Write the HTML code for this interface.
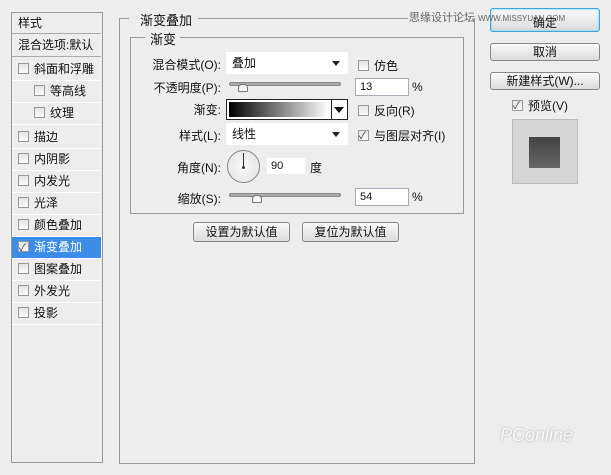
<!DOCTYPE html><html><head><meta charset="utf-8"><style>
*{box-sizing:border-box;margin:0;padding:0}
body{width:611px;height:475px;background:#ededed;font-family:"Liberation Sans","Noto Sans CJK SC",sans-serif;font-size:12px;color:#111;position:relative;overflow:hidden}
.a{position:absolute}
.row{position:absolute;left:12px;width:89px;height:22px;border-bottom:1px solid #fff;line-height:21px;padding-left:6px}
.cb{display:inline-block;width:11px;height:11px;border:1px solid #9a9a9a;background:linear-gradient(#e4e4e4,#fafafa);vertical-align:-1px;margin-right:5px;position:relative}
.cb.k::after{content:"✓";position:absolute;left:0;top:-4px;font-size:10px;color:#335}
.lbl{position:absolute;text-align:right;width:120px;left:101px}
.inp{position:absolute;background:#fff;border:1px solid #aab;padding-left:4px;line-height:16px;font-size:11px}
.combo{position:absolute;background:#fff;height:22px;line-height:22px;padding-left:6px}
.combo::after{content:"";position:absolute;right:8px;top:9px;border:4px solid transparent;border-top:5px solid #222}
.btn{position:absolute;border:1px solid #888;border-radius:3px;background:linear-gradient(#f8f8f8,#dcdcdc);text-align:center;line-height:16px}
.sl{position:absolute;height:4px;background:#aaa;border-radius:2px;border:1px solid #888}
.th{position:absolute;width:10px;height:8px;background:#f4f4f4;border:1px solid #777;border-radius:4px 4px 1px 1px}
</style></head><body>
<div class="a" style="left:11px;top:12px;width:92px;height:451px;border:1px solid #999"></div>
<div class="row" style="top:13px;height:21px;border-bottom:1px solid #aaa">样式</div>
<div class="row" style="top:35px;border-bottom:1px solid #aaa">混合选项:默认</div>
<div class="row" style="top:59px"><span class="cb"></span>斜面和浮雕</div>
<div class="row" style="top:81px;padding-left:22px"><span class="cb"></span>等高线</div>
<div class="row" style="top:103px;padding-left:22px"><span class="cb"></span>纹理</div>
<div class="row" style="top:127px"><span class="cb"></span>描边</div>
<div class="row" style="top:149px"><span class="cb"></span>内阴影</div>
<div class="row" style="top:171px"><span class="cb"></span>内发光</div>
<div class="row" style="top:193px"><span class="cb"></span>光泽</div>
<div class="row" style="top:215px"><span class="cb"></span>颜色叠加</div>
<div class="row" style="top:237px;background:#3b8de8;color:#fff"><span class="cb k"></span>渐变叠加</div>
<div class="row" style="top:259px"><span class="cb"></span>图案叠加</div>
<div class="row" style="top:281px"><span class="cb"></span>外发光</div>
<div class="row" style="top:303px"><span class="cb"></span>投影</div>

<div class="a" style="left:119px;top:18px;width:356px;height:446px;border:1px solid #999;border-top:none"></div>
<div class="a" style="left:119px;top:18px;width:10px;border-top:1px solid #999"></div>
<div class="a" style="left:198px;top:18px;width:210px;border-top:1px solid #999"></div>
<div class="a" style="left:140px;top:10px;font-size:13px">渐变叠加</div>
<div class="a" style="left:130px;top:37px;width:334px;height:177px;border:1px solid #999;border-top:none"></div>
<div class="a" style="left:130px;top:37px;width:15px;border-top:1px solid #999"></div>
<div class="a" style="left:180px;top:37px;width:284px;border-top:1px solid #999"></div>
<div class="a" style="left:150px;top:29px;font-size:13px">渐变</div>

<div class="lbl" style="top:56px">混合模式(O):</div>
<div class="combo" style="left:226px;top:52px;width:122px">叠加</div>
<div class="a" style="left:358px;top:57px"><span class="cb"></span>仿色</div>
<div class="lbl" style="top:79px">不透明度(P):</div>
<div class="sl" style="left:229px;top:82px;width:112px"></div><div class="th" style="left:238px;top:84px"></div>
<div class="inp" style="left:355px;top:78px;width:54px">13</div><div class="a" style="left:412px;top:80px">%</div>
<div class="lbl" style="top:101px">渐变:</div>
<div class="a" style="left:226px;top:99px;width:122px;height:21px;border:1px solid #222;background:#fff"><div style="position:absolute;left:2px;top:2px;width:100px;height:15px;background:linear-gradient(90deg,#000,#fff)"></div><div style="position:absolute;left:104px;top:0;width:16px;height:19px;border-left:1px solid #222"></div><div style="position:absolute;left:107px;top:7px;border:5px solid transparent;border-top:6px solid #111"></div></div>
<div class="a" style="left:358px;top:102px"><span class="cb"></span>反向(R)</div>
<div class="lbl" style="top:127px">样式(L):</div>
<div class="combo" style="left:226px;top:123px;width:122px">线性</div>
<div class="a" style="left:358px;top:127px"><span class="cb k"></span>与图层对齐(I)</div>
<div class="lbl" style="top:159px">角度(N):</div>
<div class="a" style="left:227px;top:150px;width:33px;height:33px;border:1px solid #888;border-radius:50%;background:radial-gradient(#fafafa,#e0e0e0)"><div style="position:absolute;left:15px;top:2px;width:1px;height:14px;background:#333"></div><div style="position:absolute;left:14px;top:15px;width:3px;height:3px;background:#333;border-radius:50%"></div></div>
<div class="inp" style="left:266px;top:157px;width:40px;border-color:#eee">90</div><div class="a" style="left:310px;top:159px">度</div>
<div class="lbl" style="top:190px">缩放(S):</div>
<div class="sl" style="left:229px;top:193px;width:112px"></div><div class="th" style="left:252px;top:195px"></div>
<div class="inp" style="left:355px;top:188px;width:54px">54</div><div class="a" style="left:412px;top:190px">%</div>
<div class="btn" style="left:193px;top:222px;width:97px;height:20px;line-height:18px">设置为默认值</div>
<div class="btn" style="left:302px;top:222px;width:97px;height:20px;line-height:18px">复位为默认值</div>

<div class="btn" style="left:490px;top:8px;width:110px;height:24px;line-height:28px;border-color:#3aa8d8;box-shadow:0 0 2px #5cc8f0 inset">确定</div>
<div class="a" style="left:409px;top:9px;font-size:11px;color:#666;white-space:nowrap;z-index:5">思缘设计论坛 <span style="font-size:8px">WWW.MISSYUAN.COM</span></div>
<div class="btn" style="left:490px;top:43px;width:110px;height:18px">取消</div>
<div class="btn" style="left:490px;top:72px;width:110px;height:18px">新建样式(W)...</div>
<div class="a" style="left:512px;top:97px;font-size:12px"><span class="cb k"></span>预览(V)</div>
<div class="a" style="left:512px;top:119px;width:66px;height:65px;background:#d6d6d6;border:1px solid #bbb"><div style="position:absolute;left:16px;top:17px;width:31px;height:31px;background:linear-gradient(#444,#666)"></div></div>
<div class="a" style="left:500px;top:425px;font-size:18px;color:#f8f8f8;font-style:italic;text-shadow:0 0 2px #aaa">PConline</div>
</body></html>
